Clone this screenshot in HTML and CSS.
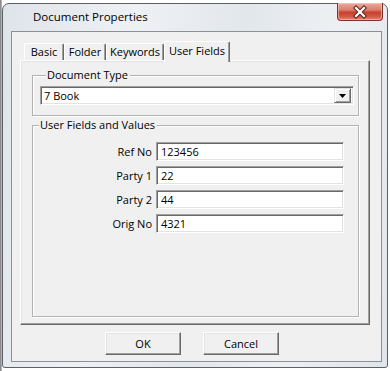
FILE: index.html
```html
<!DOCTYPE html>
<html>
<head>
<meta charset="utf-8">
<link rel="stylesheet" href="styles.css">
</head>
<body>
<div class="window">
  <div class="titlebar">
    <span class="title">Document Properties</span>
    <div class="close">
      <svg width="44" height="16" viewBox="0 0 44 16">
        <path d="M18 4 L26 12 M26 4 L18 12" stroke="#5b2219" stroke-width="4.2" stroke-linecap="square" fill="none"/>
        <path d="M18 4 L26 12 M26 4 L18 12" stroke="#ffffff" stroke-width="2.2" stroke-linecap="square" fill="none"/>
      </svg>
    </div>
  </div>
  <div class="client">
    <div class="tabs">
      <div class="tab tab-basic">Basic</div>
      <div class="tab tab-folder">Folder</div>
      <div class="tab tab-keywords">Keywords</div>
      <div class="tab tab-user active">User Fields</div>
    </div>
    <div class="panel">
      <fieldset class="group doc-type">
        <legend>Document Type</legend>
        <div class="combo">
          <span class="combo-text">7 Book</span>
          <span class="drop">
            <svg width="7" height="4" viewBox="0 0 7 4"><path d="M0 0 H7 L3.5 4 Z" fill="#000"/></svg>
          </span>
        </div>
      </fieldset>
      <fieldset class="group user-fields">
        <legend>User Fields and Values</legend>
        <div class="field-grid">
          <label class="field-label">Ref No</label><div class="input">123456</div>
          <label class="field-label">Party 1</label><div class="input">22</div>
          <label class="field-label">Party 2</label><div class="input">44</div>
          <label class="field-label">Orig No</label><div class="input">4321</div>
        </div>
      </fieldset>
    </div>
    <div class="buttons">
      <button class="btn">OK</button>
      <button class="btn">Cancel</button>
    </div>
  </div>
</div>
</body>
</html>
```

FILE: styles.css
```css
html, body {
  margin: 0;
  padding: 0;
}
body {
  width: 390px;
  height: 371px;
  overflow: hidden;
  background: linear-gradient(to right, #7a7a7a 0px, #9c9c9c 1px, #c8c8c8 2px, #ffffff 2px);
  font-family: "Open Sans", "Noto Sans", sans-serif;
  font-size: 11px;
  color: #000;
}
.window {
  position: relative;
  box-sizing: border-box;
  width: 386px;
  height: 365px;
  margin: 3px 0 0 2px;
  border: 1px solid #5c6168;
  border-radius: 7px 7px 3px 3px;
  background: linear-gradient(100deg, #dfe4ea 0%, #eef1f4 30%, #e2e7ec 55%, #edf0f3 75%, #e0e5eb 100%);
  padding: 0 5px 5px 8px;
  display: flex;
  flex-direction: column;
}
.titlebar {
  height: 27px;
  display: flex;
  align-items: flex-start;
  flex: none;
}
.title {
  margin: 5px 0 0 22px;
  font-size: 11.5px;
  line-height: 16px;
  color: #000;
}
.close {
  box-sizing: border-box;
  margin: -1px -1px 0 auto;
  width: 46px;
  height: 18px;
  border: 1px solid #7c3328;
  border-top: none;
  border-radius: 0 0 4px 4px;
  background: linear-gradient(to bottom, #e9ab9f 0%, #dc7f70 40%, #c8412c 55%, #cf5a45 80%, #e08a78 100%);
  box-shadow: inset 0 0 0 1px rgba(255, 210, 200, 0.5);
  display: flex;
  align-items: center;
  justify-content: center;
}
.close svg {
  display: block;
}
.client {
  box-sizing: border-box;
  flex: 1;
  border: 1px solid #8b9098;
  background: #f0f0f0;
  padding: 9px 11px 6px 8px;
  display: flex;
  flex-direction: column;
}
.tabs {
  display: flex;
  align-items: flex-end;
  height: 19px;
  padding-left: 4px;
  position: relative;
  z-index: 1;
  flex: none;
}
.tab {
  box-sizing: border-box;
  height: 17px;
  border-top: 1px solid #ffffff;
  border-left: 1px solid #ffffff;
  border-right: 1px solid #696969;
  border-radius: 2px 2px 0 0;
  box-shadow: inset -1px 0 0 #a0a0a0;
  text-align: center;
  line-height: 15px;
  background: #f0f0f0;
  white-space: nowrap;
}
.tab-basic { width: 40px; }
.tab-folder { width: 42px; }
.tab-keywords { width: 58px; }
.tab-user { width: 66px; }
.tab.active {
  height: 21px;
  margin-bottom: -2px;
  line-height: 17px;
}
.panel {
  box-sizing: border-box;
  width: 350px;
  height: 265px;
  flex: none;
  border: 1px solid;
  border-color: #ffffff #696969 #696969 #ffffff;
  box-shadow: inset -1px -1px 0 #a0a0a0, inset 1px 1px 0 #e3e3e3;
  padding: 0 0 7px 11px;
  display: flex;
  flex-direction: column;
}
.group {
  box-sizing: border-box;
  margin: 0;
  width: 327px;
  border: 1px solid #b2b2b2;
  box-shadow: inset 1px 1px 0 #ffffff, 1px 1px 0 #ffffff;
  min-inline-size: 0;
}
.group legend {
  padding: 0 2px 0 1px;
  margin-left: 6px;
  line-height: 14px;
  background: #f0f0f0;
  color: #000;
}
.doc-type {
  margin-top: 7px;
  padding: 4px 4px 10px 7px;
}
.combo {
  box-sizing: border-box;
  width: 314px;
  height: 19px;
  background: #fff;
  border: 1px solid;
  border-color: #a0a0a0 #ffffff #ffffff #a0a0a0;
  box-shadow: inset 1px 1px 0 #696969, inset -1px -1px 0 #e3e3e3;
  display: flex;
  align-items: center;
  padding: 0 2px 0 3px;
}
.combo-text {
  flex: 1;
  line-height: 15px;
}
.drop {
  box-sizing: border-box;
  width: 17px;
  height: 15px;
  background: #f0f0f0;
  border: 1px solid;
  border-color: #e3e3e3 #696969 #696969 #e3e3e3;
  box-shadow: inset 1px 1px 0 #ffffff, inset -1px -1px 0 #a0a0a0;
  display: flex;
  align-items: center;
  justify-content: center;
}
.drop svg { display: block; }
.user-fields {
  margin-top: 2px;
  flex: 1;
  padding: 10px 0 0 0;
}
.field-grid {
  display: grid;
  grid-template-columns: 119px 188px;
  column-gap: 4px;
  row-gap: 5px;
  align-items: center;
}
.field-label {
  text-align: right;
  line-height: 19px;
}
.input {
  box-sizing: border-box;
  height: 19px;
  background: #fff;
  border: 1px solid;
  border-color: #a0a0a0 #ffffff #ffffff #a0a0a0;
  box-shadow: inset 1px 1px 0 #696969, inset -1px -1px 0 #e3e3e3;
  padding: 0 0 0 4px;
  line-height: 17px;
}
.buttons {
  display: flex;
  gap: 22px;
  padding-left: 85px;
  margin-top: 7px;
  flex: none;
}
.btn {
  box-sizing: border-box;
  width: 76px;
  height: 23px;
  margin: 0;
  padding: 0;
  font-family: inherit;
  font-size: 11px;
  color: #000;
  background: #f0f0f0;
  border: 1px solid;
  border-color: #ffffff #696969 #696969 #ffffff;
  box-shadow: inset -1px -1px 0 #a0a0a0, inset 1px 1px 0 #e3e3e3;
}
```
